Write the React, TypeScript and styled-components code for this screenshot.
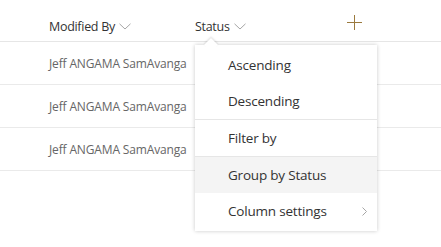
import styled, { createGlobalStyle } from "styled-components";

const Global = createGlobalStyle`
  body {
    margin: 0;
    background: #ffffff;
    font-family: "Open Sans", "Noto Sans", sans-serif;
  }
`;

const Page = styled.div`
  position: relative;
  width: 441px;
  height: 247px;
  overflow: hidden;
  background: #ffffff;
`;

const Header = styled.div`
  display: flex;
  align-items: flex-end;
  height: 42px;
  padding: 0 0 5px 49px;
  box-sizing: border-box;
  border-bottom: 1px solid #e6e6e6;
`;

const HeaderCell = styled.div<{ $width: number }>`
  display: flex;
  align-items: center;
  gap: 4px;
  flex: 0 0 ${(p) => p.$width}px;
  height: 20px;
  font-size: 12.5px;
  color: #333333;
  letter-spacing: -0.3px;
  white-space: nowrap;
`;

const AddCell = styled.div`
  display: flex;
  align-items: center;
  justify-content: center;
  width: 16px;
  height: 20px;
  margin-bottom: 4px;
`;

const Row = styled.div`
  display: flex;
  align-items: center;
  height: 42px;
  padding-left: 49px;
  border-bottom: 1px solid #eaeaea;
  font-size: 12px;
  color: #666666;
  letter-spacing: -0.15px;
`;

const Menu = styled.div`
  position: absolute;
  left: 195px;
  top: 45px;
  width: 182px;
  box-sizing: border-box;
  background: #ffffff;
  padding: 2px 0 2px;
  box-shadow: 0 0 4px rgba(0, 0, 0, 0.22);
`;

const Beak = styled.div`
  position: absolute;
  left: 11px;
  top: -5px;
  width: 10px;
  height: 10px;
  background: #ffffff;
  transform: rotate(45deg);
  box-shadow: -1px -1px 2px rgba(0, 0, 0, 0.12);
`;

const Item = styled.div<{ $active?: boolean }>`
  position: relative;
  display: flex;
  align-items: center;
  justify-content: space-between;
  height: 36px;
  padding: 0 10px 0 33px;
  font-size: 13.5px;
  color: #333333;
  letter-spacing: -0.2px;
  background: ${(p) => (p.$active ? "#f4f4f4" : "#ffffff")};
`;

const Divider = styled.div`
  height: 1px;
  background: #e6e6e6;
`;

function Chevron() {
  return (
    <svg width="12" height="7" viewBox="0 0 12 7">
      <path d="M0.5 0.8 L6 6 L11.5 0.8" fill="none" stroke="#a6a6a6" strokeWidth="1" />
    </svg>
  );
}

function Plus() {
  return (
    <svg width="15" height="15" viewBox="0 0 15 15">
      <path d="M7.5 0 V15 M0 7.5 H15" stroke="#9b7a3e" strokeWidth="1" />
    </svg>
  );
}

function RightChevron() {
  return (
    <svg width="5" height="9" viewBox="0 0 5 9">
      <path d="M0.5 0.5 L4.5 4.5 L0.5 8.5" fill="none" stroke="#a6a6a6" strokeWidth="1" />
    </svg>
  );
}

const rows = ["Jeff ANGAMA SamAvanga", "Jeff ANGAMA SamAvanga", "Jeff ANGAMA SamAvanga"];

export default function App() {
  return (
    <Page>
      <Global />
      <Header>
        <HeaderCell $width={146}>
          Modified By <Chevron />
        </HeaderCell>
        <HeaderCell $width={151}>
          Status <Chevron />
        </HeaderCell>
        <AddCell>
          <Plus />
        </AddCell>
      </Header>
      {rows.map((r, i) => (
        <Row key={i}>{r}</Row>
      ))}
      <Menu>
        <Beak />
        <Item>Ascending</Item>
        <Item>Descending</Item>
        <Divider />
        <Item>Filter by</Item>
        <Divider />
        <Item $active>Group by Status</Item>
        <Item>
          Column settings <RightChevron />
        </Item>
      </Menu>
    </Page>
  );
}
